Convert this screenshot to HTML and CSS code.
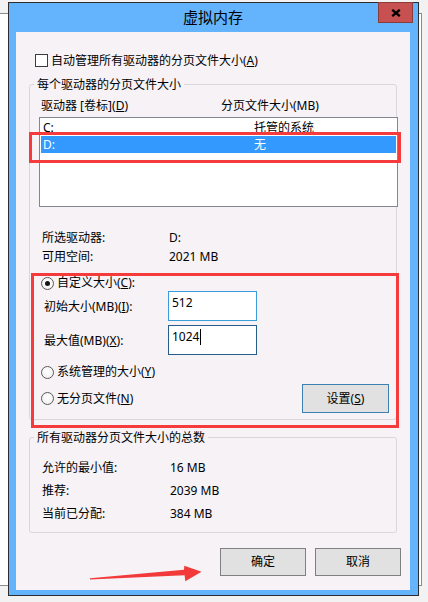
FILE: index.html
```html
<!DOCTYPE html>
<html lang="zh-CN">
<head>
<meta charset="utf-8">
<title>虚拟内存</title>
<link rel="stylesheet" href="styles.css">
</head>
<body>
<div class="backdrop"></div>
<div class="window">
  <div class="titlebar">虚拟内存</div>
  <button class="close" aria-label="关闭">
    <svg width="10" height="8" viewBox="0 0 10 8"><path d="M1.2 0.8 L8.8 7.2 M8.8 0.8 L1.2 7.2" stroke="#000" stroke-width="2.3" fill="none"/></svg>
  </button>
  <div class="content">
    <label class="check-row"><span class="checkbox"></span><span class="check-label">自动管理所有驱动器的分页文件大小(<u>A</u>)</span></label>
    <fieldset class="group group-drives">
      <legend>每个驱动器的分页文件大小</legend>
      <div class="list-head"><span>驱动器 [卷标](<u>D</u>)</span><span>分页文件大小(MB)</span></div>
      <div class="listbox">
        <div class="list-row"><span>C:</span><span>托管的系统</span></div>
        <div class="list-row selected"><span>D:</span><span>无</span></div>
      </div>
      <div class="info">
        <span>所选驱动器:</span><span>D:</span>
        <span>可用空间:</span><span>2021 MB</span>
      </div>
      <div class="radio-row first"><span class="radio checked"></span><span class="radio-label">自定义大小(<u>C</u>):</span></div>
      <div class="field-row"><span class="field-label">初始大小(MB)(<u>I</u>):</span><div class="edit hover">512</div></div>
      <div class="field-row second"><span class="field-label">最大值(MB)(<u>X</u>):</span><div class="edit focus">1024<span class="caret"></span></div></div>
      <div class="radio-row sys"><span class="radio"></span><span class="radio-label">系统管理的大小(<u>Y</u>)</span></div>
      <div class="radio-row none"><span class="radio"></span><span class="radio-label">无分页文件(<u>N</u>)</span><button class="btn set">设置(<u>S</u>)</button></div>
    </fieldset>
    <fieldset class="group group-total">
      <legend>所有驱动器分页文件大小的总数</legend>
      <div class="totals">
        <span>允许的最小值:</span><span>16 MB</span>
        <span>推荐:</span><span>2039 MB</span>
        <span>当前已分配:</span><span>384 MB</span>
      </div>
    </fieldset>
    <div class="actions">
      <button class="btn">确定</button>
      <button class="btn">取消</button>
    </div>
  </div>
</div>
<div class="mark mark-list"></div>
<div class="mark mark-custom"></div>
<svg class="arrow" width="428" height="602" viewBox="0 0 428 602">
  <polygon points="90,578.2 184,569.8 184.3,565.7 201.5,571.8 185.3,581.2 184.6,575.2 90,579.6" fill="#f23a3a"/>
</svg>
</body>
</html>
```
FILE: styles.css
```css
* {
  box-sizing: border-box;
}

html,
body {
  margin: 0;
}

body {
  position: relative;
  width: 428px;
  height: 602px;
  overflow: hidden;
  padding: 2px 0 0 8px;
  background: #f2f2f2;
  color: #000;
  font-family: "Noto Sans", "Noto Sans CJK SC", sans-serif;
  font-size: 12px;
  line-height: 16px;
}

.backdrop {
  position: absolute;
  left: -2px;
  top: 13px;
  width: 424px;
  height: 573px;
  background: #ffffff;
  border: 1px solid #8c8c8c;
}

.window {
  position: relative;
  width: 411px;
  height: 594px;
  border: 1px solid #2d2d2d;
  background: #63b3fd;
  padding: 0 8px 5px 7px;
  display: flex;
  flex-direction: column;
}

.titlebar {
  height: 29px;
  line-height: 27px;
  text-align: center;
  font-family: "Noto Sans CJK SC", sans-serif;
  font-size: 15px;
}

.close {
  position: absolute;
  top: -1px;
  right: 5px;
  width: 35px;
  height: 21px;
  padding: 0;
  margin: 0;
  background: #c75050;
  border: 1px solid #8a3b3b;
  display: flex;
  align-items: center;
  justify-content: center;
}

.close svg {
  display: block;
}

.content {
  flex: 1;
  background: #f6f2f6;
  padding: 22px 13px 0 13px;
  display: flex;
  flex-direction: column;
}

u {
  text-decoration: underline;
  text-underline-offset: 1px;
}

.check-row {
  display: flex;
  align-items: center;
  height: 13px;
  margin-left: 6px;
}

.checkbox {
  width: 13px;
  height: 13px;
  background: #fff;
  border: 1px solid #3c3c3c;
  flex: none;
}

.check-label {
  margin-left: 3px;
}

.group {
  margin: 10px 0 0;
  padding: 0;
  border: 1px solid #d8d8d8;
  border-radius: 3px;
  min-width: 0;
}

.group legend {
  padding: 0 3px;
  margin-left: 4px;
  line-height: 15px;
}

.group-drives {
  padding-bottom: 6px;
}

.list-head {
  margin-top: 6px;
  padding-left: 11px;
  display: grid;
  grid-template-columns: 180px 1fr;
}

.listbox {
  margin: 3px 0 0 9px;
  width: 359px;
  height: 90px;
  background: #fff;
  border: 1px solid #828790;
  padding: 1px;
}

.list-row {
  height: 17px;
  line-height: 17px;
  padding-left: 2px;
  display: grid;
  grid-template-columns: 211px 1fr;
}

.list-row.selected {
  background: #3399ff;
  color: #fff;
}

.info {
  margin-top: 21px;
  padding-left: 12px;
  display: grid;
  grid-template-columns: 127px 1fr;
  line-height: 19px;
}

.radio-row {
  display: flex;
  align-items: center;
  height: 16px;
  margin-left: 11px;
}

.radio-row.first {
  margin-top: 9px;
}

.radio-row.sys {
  margin-top: 9px;
}

.radio-row.none {
  margin-top: 4px;
  height: 29px;
  margin-right: 7px;
}

.radio {
  position: relative;
  width: 13px;
  height: 13px;
  border-radius: 50%;
  border: 1px solid #5a5a5a;
  background: radial-gradient(circle at 50% 40%, #ffffff 0%, #f2f2f2 70%, #e2e2e2 100%);
  flex: none;
  display: flex;
  align-items: center;
  justify-content: center;
}

.radio.checked::after {
  content: "";
  width: 5px;
  height: 5px;
  border-radius: 50%;
  background: #151515;
}

.radio-label {
  margin-left: 3px;
}

.field-row {
  display: flex;
  align-items: center;
  padding-left: 14px;
  height: 30px;
}

.field-row.second {
  margin-top: 4px;
}

.field-label {
  width: 124px;
  flex: none;
  padding-top: 1px;
}

.edit {
  width: 89px;
  height: 30px;
  background: #fff;
  border: 1px solid #3a9ddb;
  padding: 3px 0 0 3px;
  line-height: 16px;
}

.edit.focus {
  border-color: #265d8b;
}

.caret {
  display: inline-block;
  width: 1px;
  height: 16px;
  margin-left: 1px;
  background: #000;
  vertical-align: top;
}

.btn {
  width: 86px;
  height: 28px;
  padding: 0;
  margin: 0;
  background: #e1e1e1;
  border: 1px solid #808080;
  border-radius: 0;
  color: #000;
  font-family: "Noto Sans", "Noto Sans CJK SC", sans-serif;
  font-size: 12px;
  line-height: 16px;
}

.btn.set {
  width: 87px;
  height: 29px;
  margin-left: auto;
  border-color: #3c7fb1;
}

.totals {
  padding: 11px 0 7px 12px;
  display: grid;
  grid-template-columns: 128px 1fr;
  line-height: 23px;
}

.actions {
  margin-top: 15px;
  margin-right: -4px;
  display: flex;
  justify-content: flex-end;
  gap: 9px;
}

.mark {
  position: absolute;
  border: 3px solid #f53b3b;
}

.mark-list {
  left: 29px;
  top: 132px;
  width: 372px;
  height: 31px;
}

.mark-custom {
  left: 31px;
  top: 273px;
  width: 368px;
  height: 155px;
}

.arrow {
  position: absolute;
  left: 0;
  top: 0;
  pointer-events: none;
}
```
